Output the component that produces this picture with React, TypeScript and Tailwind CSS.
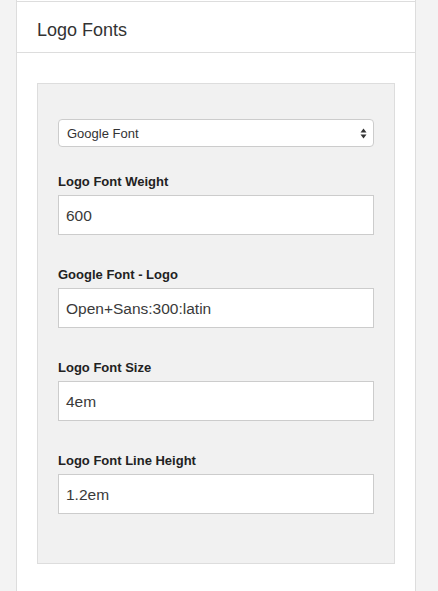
const fields = [
  { label: 'Logo Font Weight', value: '600' },
  { label: 'Google Font - Logo', value: 'Open+Sans:300:latin' },
  { label: 'Logo Font Size', value: '4em' },
  { label: 'Logo Font Line Height', value: '1.2em' },
];

function SelectArrows() {
  return (
    <svg width="7" height="11" viewBox="0 0 7 11" className="text-[#333]">
      <path d="M3.5 0.5 L6.5 4.5 L0.5 4.5 Z" fill="currentColor" />
      <path d="M3.5 10.5 L6.5 6.5 L0.5 6.5 Z" fill="currentColor" />
    </svg>
  );
}

export default function App() {
  return (
    <div
      className="min-h-[591px] bg-[#f3f3f3] pl-4 pr-[22px]"
      style={{ fontFamily: '"Liberation Sans", Arial, sans-serif' }}
    >
      <div className="min-h-[591px] bg-white border-x border-[#dddddd] pt-px">
        {/* Header */}
        <div className="border-y border-[#dddddd] pl-5 pt-4 pb-[10px]">
          <h2 className="text-[18px] leading-6 text-[#333]">Logo Fonts</h2>
        </div>

        {/* Body */}
        <div className="px-5 pt-[30px]">
          <div className="bg-[#f1f1f1] border border-[#dddddd] px-5 pt-[35px] pb-[49px]">
            <div className="h-7 rounded-[4px] border border-[#cccccc] bg-white flex items-center justify-between pl-2 pr-[6px] mb-[26px]">
              <span className="text-[13px] leading-4 pt-px text-[#333]">Google Font</span>
              <SelectArrows />
            </div>

            {fields.map((f, i) => (
              <div key={f.label} className={i < fields.length - 1 ? 'mb-[31px]' : ''}>
                <label className="block text-[13px] leading-[18px] font-bold text-[#222] mb-1">
                  {f.label}
                </label>
                <div className="h-10 border border-[#cccccc] bg-white flex items-center pl-[7px]">
                  <span className="text-[15.5px] leading-5 pt-px text-[#3a3a3a]">{f.value}</span>
                </div>
              </div>
            ))}
          </div>
        </div>
      </div>
    </div>
  );
}
